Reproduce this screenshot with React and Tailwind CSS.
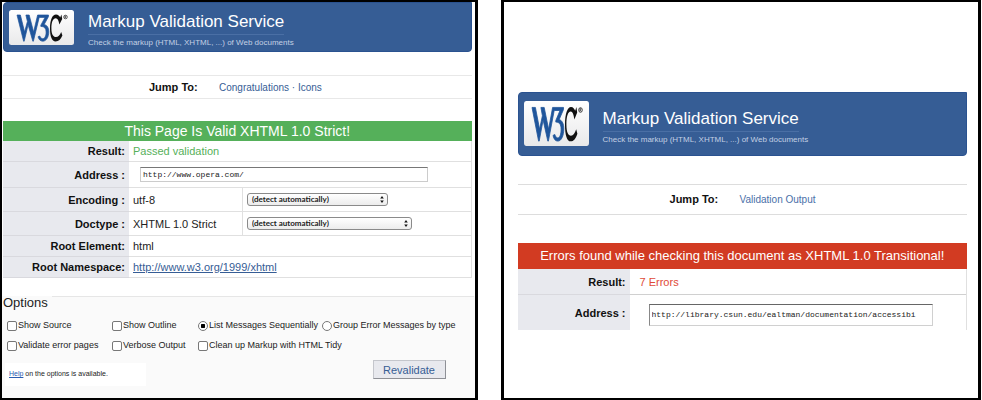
import React from "react";
import clsx from "clsx";

function Logo({ className }) {
  return (
    <svg viewBox="0 0 65 35" preserveAspectRatio="none" className={className} role="img" aria-label="W3C">
      <defs>
        <linearGradient id="plate" x1="0" y1="0" x2="0" y2="1">
          <stop offset="0" stopColor="#ffffff" />
          <stop offset="1" stopColor="#e9e9ea" />
        </linearGradient>
      </defs>
      <rect width="65" height="35" rx="2.5" fill="url(#plate)" />
      <path
        fill="#1f559b"
        stroke="#1f559b"
        strokeWidth="0.7"
        d="M8 5H11.4L15.6 22L18.4 11.5L16.9 5H20.2L24.6 22L28.6 5H39.5V6.6L35.2 14.4C38.4 15.2 39.8 18 39.8 21.6C39.8 27 37.4 31.2 33.8 31.2C31.4 31.2 29.8 29.6 29 26.8L30.8 26C31.5 27.8 32.5 28.7 33.8 28.7C35.8 28.7 37.1 25.8 37.1 22C37.1 18.2 35.4 16.4 31.8 16.4V15.2L36 7.4H30.2L24.4 31.2H23.8L19.1 14.8L15.2 31.2H14.6Z"
      />
      <path
        fill="#111111"
        d="M52.4 4.6L53.2 9L50.4 14.4C49.6 10.4 48.6 8.2 46.8 8.2C43.8 8.2 42.4 12.4 42.4 18.4C42.4 24 44.2 27 47 27C49.2 27 50.8 25.2 52.2 22L53.4 25.4C51.8 29.2 49.6 31.4 46.6 31.4C43 31.4 41 26.6 41 18.4C41 9.8 43.4 4.6 47 4.6C49.2 4.6 50.4 6 51.2 7.6Z"
      />
      <circle cx="56.5" cy="7" r="1.8" fill="none" stroke="#222222" strokeWidth="0.7" />
      <path d="M55.9 8.2V5.9H56.8V7H56L57.2 8.2" fill="none" stroke="#222222" strokeWidth="0.5" />
    </svg>
  );
}

function Banner({ large }) {
  return (
    <header
      className={clsx(
        "flex rounded-l-[4px] rounded-br-[4px] border border-[#2a5290] bg-[#365d95] pl-[5px]",
        large ? "h-16 pt-2" : "h-[50px] pt-[7px]"
      )}
    >
      <Logo className={clsx("w-[65px] shrink-0", large ? "h-[45px]" : "h-[35px]")} />
      <div className={clsx("min-w-0 whitespace-nowrap pl-3.5", large && "pt-1.5")}>
        <h1 className="w-fit border-b border-[#4a6fa5] text-[17px] leading-6 text-white">
          Markup Validation Service
        </h1>
        <p className="text-[8px] leading-4 text-[#c3d0e4]">
          Check the markup (HTML, XHTML, ...) of Web documents
        </p>
      </div>
    </header>
  );
}

const labelCell = "border-b border-[#d9d9de] bg-[#e8e9ee] pr-1 text-right font-bold text-[#111111]";
const valueCell = "border-b border-[#e0e0e0] pl-1 text-left";

function DetectSelect({ id, className }) {
  return (
    <span className={clsx("relative block", className)}>
      <select
        id={id}
        className="block h-[13px] w-full appearance-none rounded-[3px] border border-[#8a8a8a] bg-linear-to-b from-white to-[#ececec] pl-1 font-['Lato',sans-serif] text-[8px] font-bold leading-[11px] text-[#222222]"
      >
        <option>(detect automatically)</option>
      </select>
      <svg viewBox="0 0 8 10" className="pointer-events-none absolute right-0.5 top-0.5 h-[9px] w-2" aria-hidden="true">
        <path d="M4 1L6 4H2ZM4 9L6 6H2Z" fill="#111111" />
      </svg>
    </span>
  );
}

function Option({ type = "checkbox", name, id, children, defaultChecked }) {
  const radio = type === "radio";
  return (
    <span className="flex items-center gap-px whitespace-nowrap">
      <input
        type={type}
        id={id}
        name={name}
        defaultChecked={defaultChecked}
        className={clsx(
          "size-2.5 shrink-0 appearance-none border border-[#777777] bg-white",
          radio ? "rounded-full checked:bg-radial checked:from-black checked:from-35% checked:to-white checked:to-45%" : "rounded-[2px]"
        )}
      />
      <label htmlFor={id}>{children}</label>
    </span>
  );
}

function ValidPanel() {
  return (
    <section className="flex min-w-0 flex-[478] flex-col border-2 border-r-3 border-black bg-white">
      <div className="pl-px pr-[3px]">
        <Banner />
        <nav className="mt-[23px] flex h-6 items-center border-y border-[#e8e8e8] pl-[146px]">
          <strong className="w-[70px] text-[11px] text-[#111111]">Jump To:</strong>
          <span className="text-[10px] text-[#365d95]">
            <a href="#congrats">Congratulations</a> · <a href="#icons">Icons</a>
          </span>
        </nav>
        <h2 className="mt-[22px] h-5 bg-[#55b05a] text-center text-[14px] leading-5 text-white">
          This Page Is Valid XHTML 1.0 Strict!
        </h2>
        <table className="w-full table-fixed border-separate border-spacing-0 border-r border-[#e0e0e0] text-[11px] leading-[14px] text-[#222222]">
          <colgroup>
            <col className="w-[126px]" />
            <col className="w-[113px]" />
            <col />
          </colgroup>
          <tbody>
            <tr className="h-[21px]">
              <th scope="row" className={labelCell}>Result:</th>
              <td colSpan={2} className="border-b border-[#e0e0e0] pl-1 text-[#55b05a]">Passed validation</td>
            </tr>
            <tr className="h-[26px]">
              <th scope="row" className={labelCell}><label htmlFor="address">Address :</label></th>
              <td colSpan={2} className={valueCell}>
                <input
                  id="address"
                  type="text"
                  defaultValue="http://www.opera.com/"
                  className="ml-[7px] block h-[15px] w-full max-w-[288px] border border-[#cccccc] border-t-[#777777] bg-white px-0.5 font-['Liberation_Mono',monospace] text-[8px] text-[#222222]"
                />
              </td>
            </tr>
            <tr className="h-6">
              <th scope="row" className={labelCell}><label htmlFor="encoding">Encoding :</label></th>
              <td className={valueCell}>utf-8</td>
              <td className={clsx(valueCell, "border-l")}><DetectSelect id="encoding" className="w-[141px]" /></td>
            </tr>
            <tr className="h-6">
              <th scope="row" className={labelCell}><label htmlFor="doctype">Doctype :</label></th>
              <td className={valueCell}>XHTML 1.0 Strict</td>
              <td className={clsx(valueCell, "border-l")}><DetectSelect id="doctype" className="w-[165px]" /></td>
            </tr>
            <tr className="h-[21px]">
              <th scope="row" className={labelCell}>Root Element:</th>
              <td colSpan={2} className={valueCell}>html</td>
            </tr>
            <tr className="h-[21px]">
              <th scope="row" className={labelCell}>Root Namespace:</th>
              <td colSpan={2} className={valueCell}>
                <a href="#xhtml" className="text-[#365d95] underline">http://www.w3.org/1999/xhtml</a>
              </td>
            </tr>
          </tbody>
        </table>
      </div>

      <div role="group" aria-labelledby="options-title" className="mt-[18px] flex-1 bg-[#fafafa] px-px text-[9px] text-[#222222]">
        <div className="flex items-start">
          <h3 id="options-title" className="text-[13px] leading-[14px]">Options</h3>
          <div className="ml-1 flex-1 border-t border-[#e6e6e6]" />
        </div>
        <div className="mt-1.5 grid auto-rows-[20px] grid-cols-[105px_86px_1fr] items-center pl-1">
          <Option id="source">Show Source</Option>
          <Option id="outline">Show Outline</Option>
          <div className="flex gap-1">
            <Option type="radio" name="group" id="sequential" defaultChecked>List Messages Sequentially</Option>
            <Option type="radio" name="group" id="by-type">Group Error Messages by type</Option>
          </div>
          <Option id="error-pages">Validate error pages</Option>
          <Option id="verbose">Verbose Output</Option>
          <Option id="tidy">Clean up Markup with HTML Tidy</Option>
        </div>
        <div className="mt-1 flex items-start justify-between pl-0.5 pr-7">
          <p className="mt-[3px] h-[23px] w-[141px] bg-white pl-1 text-[7px] leading-[22px]">
            <a href="#help" className="text-[#2a5db0] underline">Help</a> on the options is available.
          </p>
          <button type="button" className="h-[19px] w-[73px] border border-[#c4c6cc] border-b-[#8e9096] border-r-[#8e9096] bg-[#e8e9ee] text-[11px] leading-4 text-[#365d95]">
            Revalidate
          </button>
        </div>
      </div>
    </section>
  );
}

function ErrorPanel() {
  return (
    <section className="min-w-0 flex-[480] border-2 border-x-3 border-black bg-white">
      <div className="pl-3.5 pr-[11px] pt-[90px]">
        <Banner large />
        <nav className="mt-7 flex h-[31px] items-center border-y border-[#dddddd] pl-[152px]">
          <strong className="w-[70px] text-[11px] text-[#111111]">Jump To:</strong>
          <a href="#output" className="text-[10px] text-[#4a6fa8]">Validation Output</a>
        </nav>
        <h2 className="mt-7 h-[26px] whitespace-nowrap bg-[#d23b22] text-center text-[13px] leading-[26px] text-white">
          Errors found while checking this document as XHTML 1.0 Transitional!
        </h2>
        <table className="w-full table-fixed border-separate border-spacing-0 border-r border-[#e0e0e0] text-[11px] leading-[14px]">
          <colgroup>
            <col className="w-[112px]" />
            <col />
          </colgroup>
          <tbody>
            <tr className="h-[26px]">
              <th scope="row" className={labelCell}>Result:</th>
              <td className="border-b border-[#d0d0d0] pl-2.5 text-[#e04a38]">7 Errors</td>
            </tr>
            <tr className="h-[35px]">
              <th scope="row" className="bg-[#e8e9ee] pr-1 text-right font-bold text-[#111111]">
                <label htmlFor="error-address">Address :</label>
              </th>
              <td className="pl-[19px] pt-1">
                <input
                  id="error-address"
                  type="text"
                  defaultValue="http://library.csun.edu/ealtman/documentation/accessibi"
                  className="block h-[22px] w-full max-w-[284px] border border-[#d0d0d0] border-l-[#888888] border-t-[#666666] bg-white px-0.5 font-['Liberation_Mono',monospace] text-[8px] text-[#222222]"
                />
              </td>
            </tr>
          </tbody>
        </table>
      </div>
    </section>
  );
}

export default function App() {
  return (
    <main className="flex min-h-screen gap-[23px] bg-white pr-px font-['Liberation_Sans',sans-serif]">
      <ValidPanel />
      <ErrorPanel />
    </main>
  );
}
